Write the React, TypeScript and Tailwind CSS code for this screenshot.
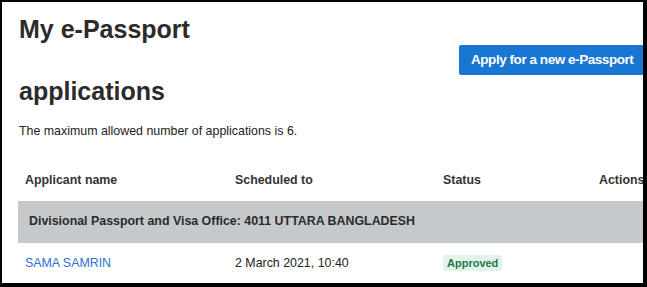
export default function App() {
	return (
		<div className="h-[287px] w-[647px] overflow-hidden border-t-2 border-r-4 border-b-4 border-l-2 border-black bg-white font-['Liberation_Sans',Arial,sans-serif] text-[#333]">
			<div className="w-[700px] pl-[16px]">
				<div className="flex items-start">
					<h1 className="-mt-[4px] ml-[1px] w-[240px] text-[25px] leading-[62px] font-bold text-[#2b2b2b]">
						My e-Passport applications
					</h1>
					<button className="mt-[43px] ml-[200px] h-[30px] rounded-[2px] bg-[#1976d2] px-[12px] text-[13.5px] font-bold tracking-[-0.45px] text-white">
						Apply for a new e-Passport
					</button>
				</div>
				<p className="ml-[1px] text-[12.4px] text-[#222]">
					The maximum allowed number of applications is 6.
				</p>
				<div className="mt-[27px] w-[700px]">
					<div className="grid h-[33px] grid-cols-[210px_208px_156px_1fr] items-center px-[7px] pb-[8px] text-[12.4px] font-bold">
						<span>Applicant name</span>
						<span>Scheduled to</span>
						<span>Status</span>
						<span>Actions</span>
					</div>
					<div className="flex h-[42px] items-center bg-[#c5c9cc] px-[11px] text-[12.4px] font-bold text-[#2b2b2b]">
						Divisional Passport and Visa Office: 4011 UTTARA BANGLADESH
					</div>
					<div className="grid h-[42px] grid-cols-[210px_208px_156px_1fr] items-center px-[7px] text-[12.4px]">
						<a className="text-[#2f6fd6]">SAMA SAMRIN</a>
						<span className="text-[#222]">2 March 2021, 10:40</span>
						<span>
							<span className="rounded-[3px] bg-[#e2f3ea] px-[4px] py-[2px] text-[11px] font-bold text-[#1f7a4c]">
								Approved
							</span>
						</span>
						<span />
					</div>
				</div>
			</div>
		</div>
	);
}
